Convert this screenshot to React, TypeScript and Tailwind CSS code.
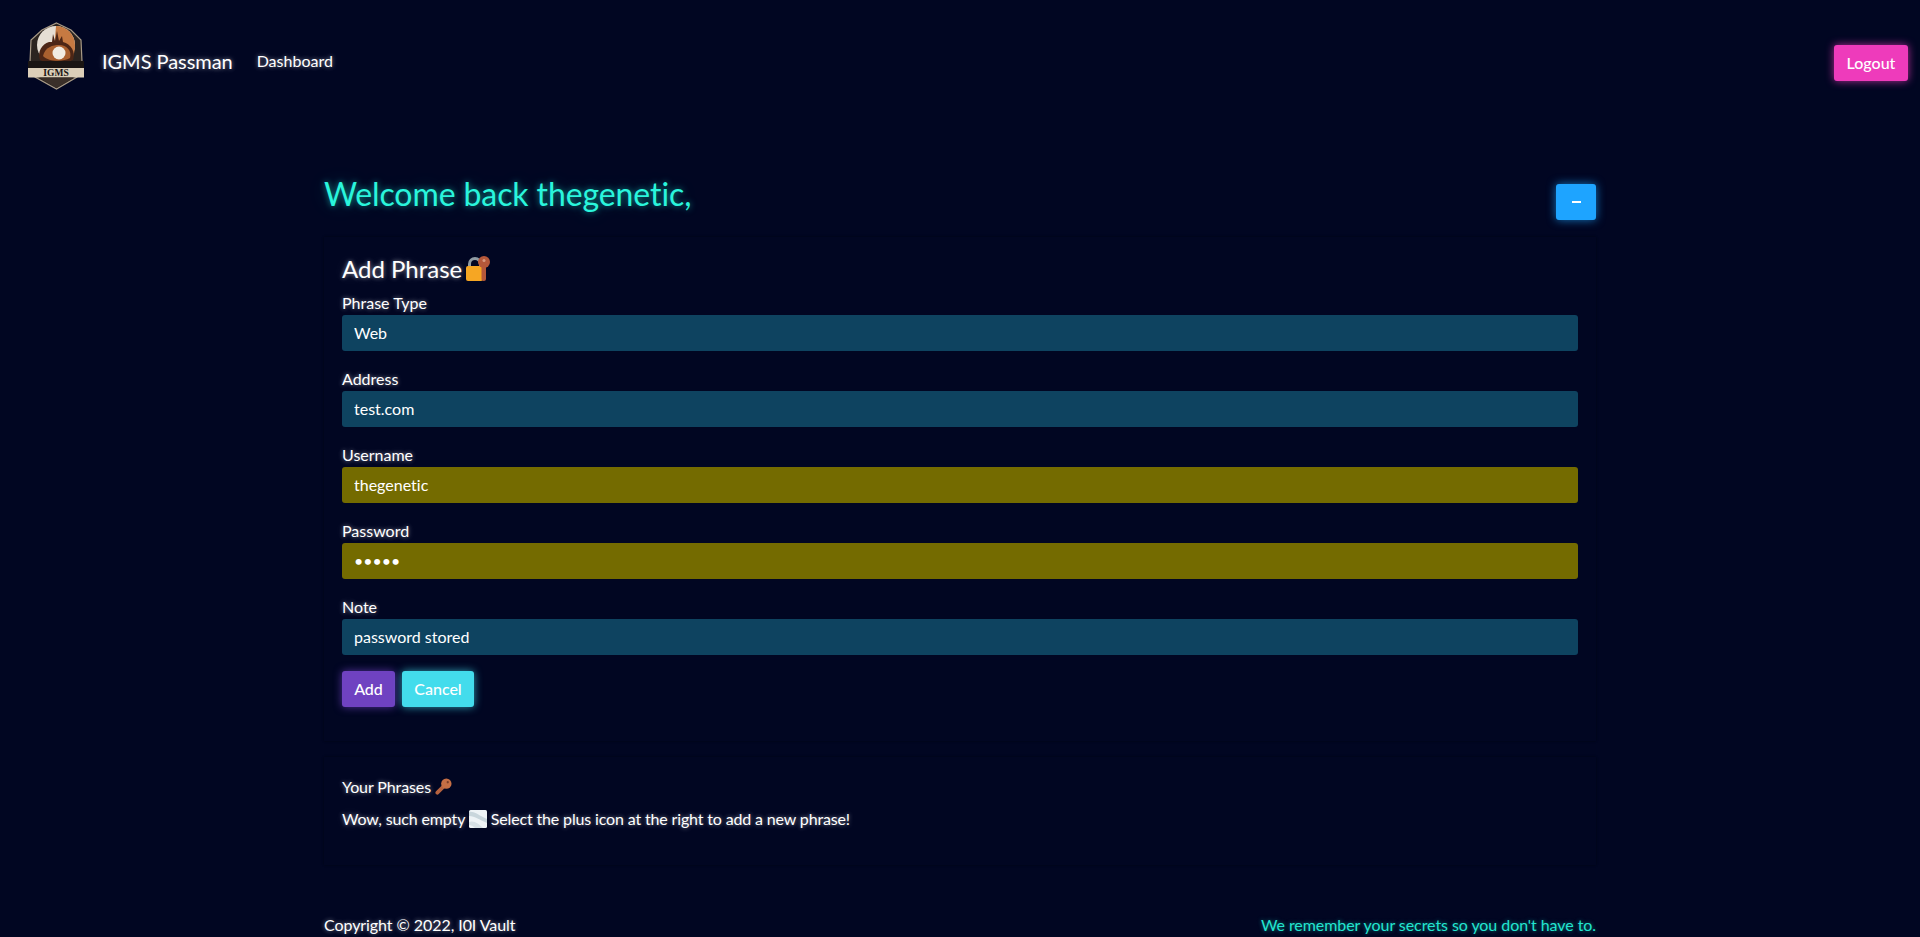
const whiteGlow = "[text-shadow:0_0_4px_rgba(255,255,255,0.5),0_0_14px_rgba(255,255,255,0.15)]";

const Logo = () => (
	<svg viewBox="0 0 58 68" className="w-[58px] h-[68px] mb-[10px]">
		<path d="M29.5 1 L44 8 L54 18 L55 40 L50 55 L29.5 67 L8 55 L3 40 L4 18 L15 8 Z" fill="#2b2420" stroke="#a89a86" strokeWidth="1.2" />
		<circle cx="29" cy="23" r="19" fill="#e6dfd4" />
		<path d="M29 4 A19 19 0 0 1 48 23 C48 30 46 36 42 40 H26 Z" fill="#c67a42" />
		<path d="M13 38 C10 30 15 22 22 20 L25 20 L26 12 L28 19 L30 9 L32 19 L35 14 L36 20 C44 22 49 30 46 38 C38 42 20 42 13 38 Z" fill="#4c2616" />
		<path d="M16 34 C18 25 26 23 32 23 C40 23 45 29 43 36 C36 40 22 40 16 34 Z" fill="#a9602f" />
		<circle cx="32" cy="31" r="6.5" fill="#f1ece2" />
		<rect x="1" y="39" width="56" height="7" fill="#1a1513" />
		<rect x="1" y="46" width="56" height="9.5" fill="#dccfb9" />
		<text x="29" y="54.2" textAnchor="middle" fontFamily="Liberation Serif, serif" fontWeight="700" fontSize="9.5" fill="#1a1513">
			IGMS
		</text>
		<path d="M12 55.5 H47 L29.5 66 Z" fill="#3a2f29" />
	</svg>
);

const LockKey = () => (
	<svg viewBox="0 0 26 26" className="inline-block shrink-0 w-[26px] h-[26px]">
		<path d="M4.5 12 V8 A5.5 5.5 0 0 1 15.5 8 V12" fill="none" stroke="#8f9ba3" strokeWidth="3" />
		<rect x="1" y="10" width="17" height="15" rx="2" fill="#f6a623" />
		<rect x="16.5" y="8" width="4.5" height="17" rx="2" fill="#b5583a" />
		<circle cx="19" cy="6" r="6" fill="#b5583a" />
		<circle cx="19" cy="4.5" r="1.5" fill="#d99a80" />
	</svg>
);

const KeyEmoji = () => (
	<svg viewBox="0 0 18 18" className="inline-block w-[17px] h-[17px] align-[-2px]">
		<path d="M10 8 L2.5 15.5" stroke="#b5623f" strokeWidth="4" strokeLinecap="round" />
		<circle cx="12" cy="6" r="5.5" fill="#c66f45" />
		<circle cx="13.5" cy="4.5" r="1.2" fill="#7a3d28" />
	</svg>
);

const FogEmoji = () => (
	<svg viewBox="0 0 18 18" className="inline-block w-[18px] h-[18px] align-[-3px]">
		<rect width="18" height="18" rx="1.5" fill="#eef3f6" />
		<path d="M0 2 C6 1 10 6 18 9 V13 C11 10 6 6 0 6 Z" fill="#c9d6dc" />
		<path d="M0 12 C5 10 10 14 14 18 H6 C4 16 2 15 0 15 Z" fill="#d6e0e5" />
	</svg>
);

const Field = ({ label, value, filled, type }: { label: string; value: string; filled?: boolean; type?: string }) => (
	<div className="mb-4">
		<label className={`block text-[16px] leading-6 ${whiteGlow}`}>{label}</label>
		<input
			readOnly
			type={type ?? "text"}
			value={value}
			className={`block w-full h-9 px-3 pb-[2px] rounded-[3px] text-white text-[16px] outline-none ${filled ? "bg-[#746b00]" : "bg-[#0e4360]"}`}
		/>
	</div>
);

export default function App() {
	return (
		<div className="min-h-[937px] bg-[#010622] text-white font-['Lato','Noto_Sans',sans-serif] [font-variant-ligatures:none]">
			<nav className="flex items-center h-[122px] pl-[27px] pr-3">
				<Logo />
				<span className={`ml-[17px] mb-[1px] text-[20px] tracking-[-0.05px] ${whiteGlow}`}>IGMS Passman</span>
				<a className={`ml-6 mb-[1px] text-[16px] ${whiteGlow}`}>Dashboard</a>
				<button className="ml-auto mt-[3px] w-[74px] h-9 rounded-[3px] bg-[#ee3bbb] text-white text-[16px] font-medium shadow-[0_0_8px_rgba(238,59,187,0.75)]">
					Logout
				</button>
			</nav>

			<main className="w-[1272px] mx-auto">
				<div className="flex justify-between items-start pt-[52px] h-[115px]">
					<h1 className="text-[32px] leading-10 tracking-[-0.1px] text-[#2af5dc] [text-shadow:0_0_6px_rgba(34,245,220,0.55),0_0_20px_rgba(34,245,220,0.2)]">
						Welcome back thegenetic,
					</h1>
					<button className="flex items-center justify-center mt-[10px] w-10 h-9 rounded-[3px] bg-[#1ea4ff] shadow-[0_0_10px_rgba(30,164,255,0.7)]">
						<span className="block w-[9px] h-[2px] bg-white" />
					</button>
				</div>

				<section className="px-[18px] pt-[14px] pb-[34px] h-[504px] shadow-[0_0_2px_rgba(0,0,0,0.5)]">
					<h2 className={`flex items-center gap-[3px] h-9 mb-1 text-[24px] ${whiteGlow}`}>
						Add Phrase
						<LockKey />
					</h2>
					<Field label="Phrase Type" value="Web" />
					<Field label="Address" value="test.com" />
					<Field label="Username" value="thegenetic" filled />
					<Field label="Password" value="•••••" filled />
					<Field label="Note" value="password stored" />
					<div className="flex gap-[7px]">
						<button className="w-[53px] h-9 rounded-[3px] bg-[#6f42c1] text-white text-[16px] font-medium shadow-[0_0_8px_rgba(111,66,193,0.75)]">
							Add
						</button>
						<button className="w-[72px] h-9 rounded-[3px] bg-[#43dcec] text-white text-[16px] font-medium shadow-[0_0_8px_rgba(67,220,236,0.7)]">
							Cancel
						</button>
					</div>
				</section>

				<section className="mt-4 px-[18px] pt-[18px] h-[108px] shadow-[0_0_2px_rgba(0,0,0,0.5)]">
					<p className={`text-[16px] leading-6 tracking-[-0.1px] ${whiteGlow}`}>
						Your Phrases <KeyEmoji />
					</p>
					<p className={`mt-2 text-[16px] leading-6 tracking-[-0.15px] ${whiteGlow}`}>
						Wow, such empty <FogEmoji /> Select the plus icon at the right to add a new phrase!
					</p>
				</section>

				<footer className="flex justify-between mt-12 text-[16px] leading-6 tracking-[-0.07px]">
					<span className={whiteGlow}>Copyright © 2022, I0I Vault</span>
					<span className="text-[#22e5d0] [text-shadow:0_0_4px_rgba(34,245,220,0.5)]">
						We remember your secrets so you don't have to.
					</span>
				</footer>
			</main>
		</div>
	);
}
